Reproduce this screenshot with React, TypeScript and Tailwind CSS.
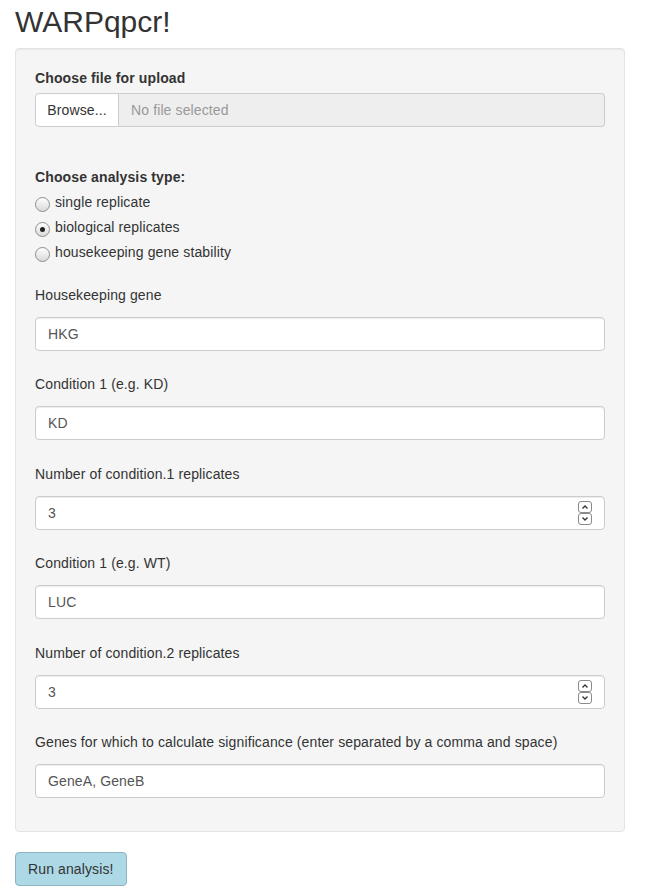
import React from 'react';

/* ─── data ─────────────────────────────────────────────────── */
const fields = [
  { label: 'Housekeeping gene', value: 'HKG', number: false },
  { label: 'Condition 1 (e.g. KD)', value: 'KD', number: false },
  { label: 'Number of condition.1 replicates', value: '3', number: true },
  { label: 'Condition 1 (e.g. WT)', value: 'LUC', number: false },
  { label: 'Number of condition.2 replicates', value: '3', number: true },
  {
    label: 'Genes for which to calculate significance (enter separated by a comma and space)',
    value: 'GeneA, GeneB',
    number: false,
  },
];

const analysisTypes = ['single replicate', 'biological replicates', 'housekeeping gene stability'];

/* ─── bits ─────────────────────────────────────────────────── */
function Radio({ checked, label }: { checked: boolean; label: string }) {
  return (
    <div className="flex h-[20px] items-center">
      <span className="mt-[4px] flex h-[15px] w-[15px] items-center justify-center rounded-full border border-[#8e8e8e] bg-[linear-gradient(to_bottom,#fefefe,#d9d9d9)]">
        {checked && <span className="h-[5px] w-[5px] rounded-full bg-[#222]" />}
      </span>
      <span className="ml-[5px]">{label}</span>
    </div>
  );
}

function Spinner() {
  return (
    <div className="flex w-[14px] flex-col">
      <div className="flex h-[12px] items-center justify-center rounded-[3px] border border-[#8a8a8a] bg-white">
        <svg width="8" height="6" viewBox="0 0 8 6" fill="none">
          <path d="M1.5 4.5L4 2l2.5 2.5" stroke="#333" strokeWidth="1.3" />
        </svg>
      </div>
      <div className="flex h-[12px] items-center justify-center rounded-[3px] border border-[#8a8a8a] bg-white">
        <svg width="8" height="6" viewBox="0 0 8 6" fill="none">
          <path d="M1.5 1.5L4 4l2.5-2.5" stroke="#333" strokeWidth="1.3" />
        </svg>
      </div>
    </div>
  );
}

/* ─── page ─────────────────────────────────────────────────── */
export default function App() {
  return (
    <div className="min-h-screen bg-white px-[15px] pt-[5px] font-['Liberation_Sans',Arial,sans-serif] text-[14px] leading-[20px] tracking-[0.12px] text-[#333]">
      <h2 className="text-[30px] font-normal leading-[33px] tracking-normal">WARPqpcr!</h2>

      <div className="mt-[10px] w-[610px] rounded-[4px] border border-[#e3e3e3] bg-[#f5f5f5] p-[19px] shadow-[inset_0_1px_1px_rgba(0,0,0,0.05)]">
        {/* file upload */}
        <div className="mb-[40px]">
          <div className="mb-[5px] font-bold">Choose file for upload</div>
          <div className="flex h-[34px]">
            <div className="flex w-[84px] items-center justify-center rounded-l-[4px] border border-[#ccc] bg-white">
              Browse...
            </div>
            <div className="flex flex-1 items-center rounded-r-[4px] border border-l-0 border-[#ccc] bg-[#eee] px-[12px] text-[#999]">
              No file selected
            </div>
          </div>
        </div>

        {/* analysis type */}
        <div className="mb-[23px]">
          <div className="mb-[5px] font-bold">Choose analysis type:</div>
          <div className="flex flex-col gap-[5px]">
            {analysisTypes.map((t) => (
              <Radio key={t} label={t} checked={t === 'biological replicates'} />
            ))}
          </div>
        </div>

        {/* text / numeric inputs */}
        {fields.map((f, i) => (
          <div key={f.label} className={i === fields.length - 1 ? 'mb-[14px]' : 'mb-[23.4px]'}>
            <div className="mb-[12px]">{f.label}</div>
            <div className="flex h-[34px] items-center justify-between rounded-[4px] border border-[#ccc] bg-white px-[12px] text-[#555] shadow-[inset_0_1px_1px_rgba(0,0,0,0.075)]">
              <span>{f.value}</span>
              {f.number && <Spinner />}
            </div>
          </div>
        ))}
      </div>

      <button className="mt-[20px] h-[34px] rounded-[4px] border border-[#8fb3c2] bg-[#add8e6] px-[12px] text-[14px] text-[#333]">
        Run analysis!
      </button>
    </div>
  );
}
